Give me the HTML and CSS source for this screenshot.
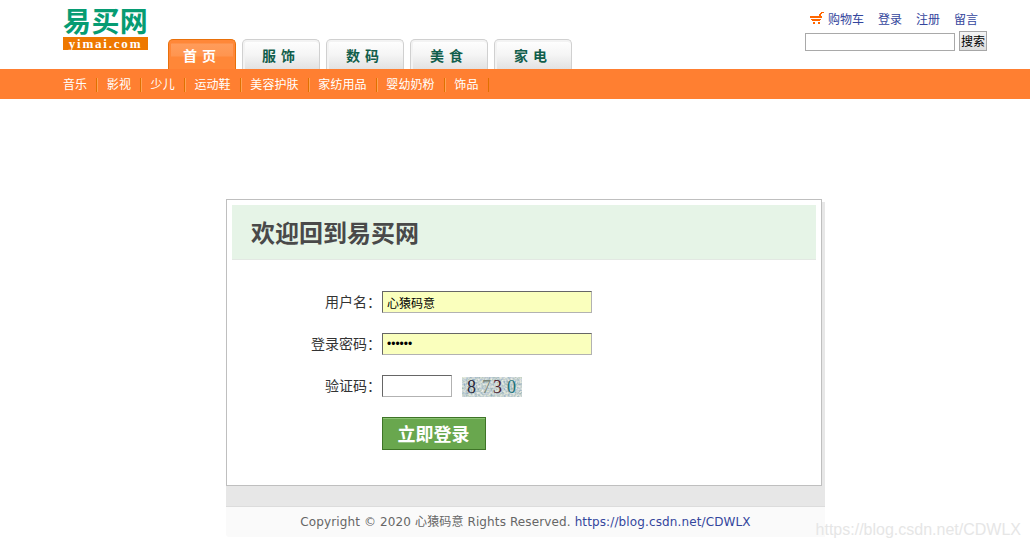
FILE: index.html
```html
<!DOCTYPE html>
<html lang="zh-CN">

<head>
  <meta charset="utf-8">
  <title>易买网 - 登录</title>
  <link rel="stylesheet" href="styles.css">
</head>

<body>
  <div id="header" class="wrap">
    <div id="logo">
      <div class="logo-name">易买网</div>
      <div class="logo-url">yimai.com</div>
    </div>
    <ul class="navbar">
      <li class="current"><a href="#">首 页</a></li>
      <li><a href="#">服 饰</a></li>
      <li><a href="#">数 码</a></li>
      <li><a href="#">美 食</a></li>
      <li><a href="#">家 电</a></li>
    </ul>
    <div class="help">
      <div class="help-links">
        <svg class="cart" width="14" height="12" viewBox="0 0 14 12" shape-rendering="crispEdges" fill="#ff6600">
          <path d="M11 0h3v1h-3zM10 1h2v1h-2zM9 2h2v2H9zM0 4h12v2H0zM1 7h10v1H1zM2 8h8v1H2zM3 10h2v2H3zM8 10h2v2H8z" />
        </svg>
        <a href="#">购物车</a>
        <a href="#">登录</a>
        <a href="#">注册</a>
        <a href="#">留言</a>
      </div>
      <form class="search">
        <input type="text">
        <button type="button">搜索</button>
      </form>
    </div>
  </div>

  <div id="childNav">
    <ul class="wrap">
      <li><a href="#">音乐</a></li>
      <li><a href="#">影视</a></li>
      <li><a href="#">少儿</a></li>
      <li><a href="#">运动鞋</a></li>
      <li><a href="#">美容护肤</a></li>
      <li><a href="#">家纺用品</a></li>
      <li><a href="#">婴幼奶粉</a></li>
      <li><a href="#">饰品</a></li>
    </ul>
  </div>

  <!-- Login box -->
  <div id="register">
    <div class="shadow">
      <div class="box">
        <h1>欢迎回到易买网</h1>
        <form class="login">
          <label for="userName">用户名：</label>
          <div><input class="text filled" type="text" id="userName" value="心猿码意"></div>
          <label for="passWord">登录密码：</label>
          <div><input class="text filled" type="password" id="passWord" value="123456"></div>
          <label for="veryCode">验证码：</label>
          <div class="very">
            <input class="text short" type="text" id="veryCode">
            <svg class="code" width="60" height="20" viewBox="0 0 60 20">
              <filter id="noise" x="0" y="0" width="100%" height="100%">
                <feTurbulence type="fractalNoise" baseFrequency="0.45" numOctaves="2" seed="8" />
                <feColorMatrix values="0.9 0 0 0 0.12  0.7 0.1 0 0 0.25  0.4 0 0.3 0 0.3  0 0 0 0 1" />
              </filter>
              <rect width="60" height="20" filter="url(#noise)" />
              <text x="5" y="16" fill="#28283c">8</text>
              <text x="20" y="16" fill="#788478">7</text>
              <text x="31" y="16" fill="#502430">3</text>
              <text x="45" y="16" fill="#207078">0</text>
            </svg>
          </div>
          <button class="submit" type="button">立即登录</button>
        </form>
      </div>
    </div>
    <div id="footer">Copyright © 2020 心猿码意 Rights Reserved. <a href="#">https://blog.csdn.net/CDWLX</a></div>
  </div>

  <div class="watermark">https://blog.csdn.net/CDWLX</div>
</body>

</html>
```
FILE: styles.css
```css
* {
  margin: 0;
  padding: 0;
  box-sizing: border-box;
}

body {
  height: 548px;
  overflow: hidden;
  background: #fff;
  color: #333;
  font: 12px/18px "DejaVu Sans", "Noto Sans CJK SC", sans-serif;
}

ul {
  list-style: none;
}

a {
  color: #34469d;
  text-decoration: none;
}

input,
button {
  font-family: "Noto Sans CJK SC", sans-serif;
  font-size: 12px;
}

.wrap {
  width: 924px;
  margin-left: 63px;
}

/* Header */

#header {
  display: flex;
  height: 69px;
}

#logo {
  width: 85px;
  margin-right: 20px;
  padding-top: 6px;
}

.logo-name {
  height: 31px;
  color: #069c73;
  font: bold 28px/28px "Noto Sans CJK SC", sans-serif;
  letter-spacing: 0.4px;
  white-space: nowrap;
}

.logo-url {
  height: 13px;
  background: #ee7800;
  color: #fff;
  font: bold 13px/13px "Liberation Serif", serif;
  letter-spacing: 1.8px;
  text-align: center;
}

/* Tabs */

.navbar {
  display: flex;
  gap: 6px;
  align-items: flex-end;
}

.navbar li {
  width: 78px;
  height: 30px;
  padding-right: 5px;
  border: 1px solid #d0d0d0;
  border-bottom: none;
  border-radius: 5px 5px 0 0;
  background: linear-gradient(#fff, #f5f5f5 50%, #e2e2e2);
  box-shadow: inset 0 2px #f3f3f3, inset 2px 0 #f3f3f3;
  text-align: center;
}

.navbar a {
  color: #115e4b;
  font: bold 14px/31px "Noto Sans CJK SC", sans-serif;
  word-spacing: 2px;
}

.navbar .current {
  width: 68px;
  border-color: #e8700a;
  background: linear-gradient(#ff8738 3px, #ff9c5b 4px, #ff954f 16px, #ff8738 17px);
  box-shadow: inset 0 0 0 2px #ff8738;
}

.navbar .current a {
  color: #fff;
}

/* Cart links and search */

.help {
  width: 182px;
  margin-left: auto;
  padding-top: 11px;
}

.help-links {
  display: flex;
  padding-left: 5px;
  white-space: nowrap;
}

.help-links a {
  margin-right: 14px;
}

.cart {
  flex: none;
  margin: 1px 4px 0 0;
}

.search {
  display: flex;
  justify-content: space-between;
  align-items: flex-end;
  margin-top: 2px;
}

.search input {
  width: 150px;
  height: 18px;
  border: 1px solid #a9a9a9;
}

.search button {
  width: 28px;
  height: 20px;
  border: 1px solid #a6a6a6;
  background: linear-gradient(#f5f5f5, #dedede);
  line-height: 18px;
}

/* Second level nav */

#childNav {
  height: 30px;
  background: #ff7f31;
}

#childNav ul {
  display: flex;
  padding-top: 9px;
}

#childNav li {
  height: 14px;
  margin-right: 9.6px;
  padding-right: 9px;
  border-right: 1px solid #e07000;
  box-shadow: 1px 0 #ffa255;
  line-height: 15px;
}

#childNav li:last-child {
  box-shadow: none;
}

#childNav a {
  color: #fff;
  letter-spacing: 0.1px;
}

/* Login box */

#register {
  width: 599px;
  margin: 100px 0 0 226px;
}

.shadow {
  height: 308px;
  padding-right: 3px;
  border-bottom: 1px solid #dcdcdc;
  background: linear-gradient(#fff, #fff) top / 100% 3px no-repeat #e7e7e7;
}

.box {
  height: 287px;
  padding: 5px;
  border: 1px solid #bfbfbf;
  background: #fff;
}

.box h1 {
  height: 55px;
  padding-left: 19px;
  border-bottom: 1px solid #e3e8e3;
  background: #e6f4e7;
  color: #494949;
  font: bold 24px/53px "Noto Sans CJK SC", sans-serif;
}

.login {
  display: grid;
  grid-template-columns: 149px 1fr;
  grid-template-rows: 22px 22px 22px 33px;
  gap: 20px 1px;
  padding-top: 31px;
}

.login label {
  font-size: 14px;
  line-height: 22px;
  text-align: right;
}

.text {
  display: block;
  width: 210px;
  height: 22px;
  padding-left: 4px;
  border: 1px solid;
  border-color: #666 #b2b2b2 #b2b2b2 #666;
}

.text[type=password] {
  font-family: "Liberation Sans", sans-serif;
}

.filled {
  background: #faffbd;
}

.short {
  width: 70px;
}

.very {
  display: flex;
  gap: 10px;
}

.code {
  margin-top: 2px;
  font: 18px "Liberation Serif", serif;
}

.submit {
  grid-column: 2;
  width: 104px;
  padding-right: 1px;
  border: 1px solid #3e7427;
  background: #69a74e;
  box-shadow: inset 0 1px #8dc475;
  color: #fff;
  font-size: 18px;
  font-weight: bold;
  line-height: 31px;
}

#footer {
  height: 30px;
  border-bottom-left-radius: 3px;
  background: #fafafa;
  color: #666;
  letter-spacing: 0.12px;
  line-height: 30px;
  text-align: center;
}

.watermark {
  position: absolute;
  right: 9px;
  bottom: 8px;
  color: #e6e6e6;
  font: 16px/20px "Liberation Sans", sans-serif;
}
```
